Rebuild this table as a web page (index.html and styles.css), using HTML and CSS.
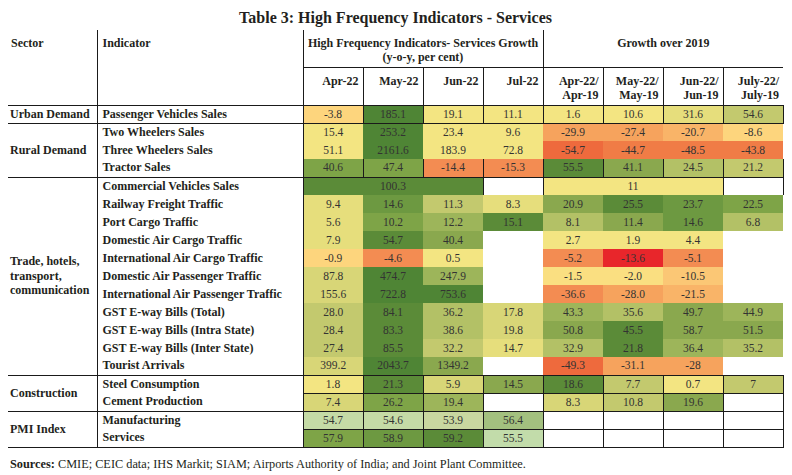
FILE: index.html
```html
<!DOCTYPE html>
<html lang="en">
<head>
<meta charset="utf-8">
<title>Table 3: High Frequency Indicators - Services</title>
<link rel="stylesheet" href="styles.css">
</head>
<body>
<table class="tbl">
  <colgroup>
    <col class="w-sec"><col class="w-ind">
    <col class="w-n"><col class="w-n"><col class="w-n"><col class="w-n">
    <col class="w-n"><col class="w-n"><col class="w-n"><col class="w-n">
  </colgroup>
  <thead>
    <tr class="r-title"><th colspan="10" class="title">Table 3: High Frequency Indicators - Services</th></tr>
    <tr class="r-h1">
      <th rowspan="2" class="h-sec">Sector</th>
      <th rowspan="2" class="h-ind">Indicator</th>
      <th colspan="4" class="h-grp h-grp1">High Frequency Indicators- Services Growth<br>(y-o-y, per cent)</th>
      <th colspan="4" class="h-grp">Growth over 2019</th>
    </tr>
    <tr class="r-h2">
      <th class="h-m">Apr-22</th>
      <th class="h-m">May-22</th>
      <th class="h-m">Jun-22</th>
      <th class="h-m">Jul-22</th>
      <th class="h-m">Apr-22/<br>Apr-19</th>
      <th class="h-m">May-22/<br>May-19</th>
      <th class="h-m">Jun-22/<br>Jun-19</th>
      <th class="h-m h-last">July-22/<br>July-19</th>
    </tr>
  </thead>
  <tbody>
    <tr class="vgrid end">
      <td class="sec">Urban Demand</td>
      <td class="ind">Passenger Vehicles Sales</td>
      <td class="n o1">-3.8</td><td class="n gd">185.1</td><td class="n y3">19.1</td><td class="n y3">11.1</td>
      <td class="n y3 b19">1.6</td><td class="n y3 b19">10.6</td><td class="n y2 b19">31.6</td><td class="n g7 b19">54.6</td>
    </tr>
    <tr>
      <td class="sec end-cell" rowspan="3">Rural Demand</td>
      <td class="ind">Two Wheelers Sales</td>
      <td class="n y3">15.4</td><td class="n gd">253.2</td><td class="n y3">23.4</td><td class="n y3">9.6</td>
      <td class="n o3 b19">-29.9</td><td class="n o3 b19">-27.4</td><td class="n o2 b19">-20.7</td><td class="n o1 b19">-8.6</td>
    </tr>
    <tr>
      <td class="ind">Three Wheelers Sales</td>
      <td class="n y3">51.1</td><td class="n gd">2161.6</td><td class="n y3">183.9</td><td class="n y3">72.8</td>
      <td class="n o6 b19">-54.7</td><td class="n o5 b19">-44.7</td><td class="n o5 b19">-48.5</td><td class="n o5 b19">-43.8</td>
    </tr>
    <tr class="vgrid end">
      <td class="ind">Tractor Sales</td>
      <td class="n g3">40.6</td><td class="n g3">47.4</td><td class="n o4">-14.4</td><td class="n o4">-15.3</td>
      <td class="n g1 b19">55.5</td><td class="n g4 b19">41.1</td><td class="n g6 b19">24.5</td><td class="n g7 b19">21.2</td>
    </tr>
    <tr class="vgrid">
      <td class="sec end-cell" rowspan="11">Trade, hotels,<br>transport,<br>communication</td>
      <td class="ind">Commercial Vehicles Sales</td>
      <td class="n g1" colspan="3">100.3</td><td class="n blank"></td>
      <td class="n y3 b19" colspan="3">11</td><td class="n blank b19"></td>
    </tr>
    <tr>
      <td class="ind">Railway Freight Traffic</td>
      <td class="n y2">9.4</td><td class="n g2">14.6</td><td class="n g7">11.3</td><td class="n y2">8.3</td>
      <td class="n g4 b19">20.9</td><td class="n g1 b19">25.5</td><td class="n g2 b19">23.7</td><td class="n g3 b19">22.5</td>
    </tr>
    <tr>
      <td class="ind">Port Cargo Traffic</td>
      <td class="n y2">5.6</td><td class="n g3">10.2</td><td class="n g5">12.2</td><td class="n g1">15.1</td>
      <td class="n g6 b19">8.1</td><td class="n g4 b19">11.4</td><td class="n g2 b19">14.6</td><td class="n g6 b19">6.8</td>
    </tr>
    <tr>
      <td class="ind">Domestic Air Cargo Traffic</td>
      <td class="n y2">7.9</td><td class="n g1">54.7</td><td class="n g4">40.4</td><td class="n blank"></td>
      <td class="n y3 b19">2.7</td><td class="n y3 b19">1.9</td><td class="n y3 b19">4.4</td><td class="n blank b19"></td>
    </tr>
    <tr>
      <td class="ind">International Air Cargo Traffic</td>
      <td class="n o1">-0.9</td><td class="n o4">-4.6</td><td class="n y3">0.5</td><td class="n blank"></td>
      <td class="n o4 b19">-5.2</td><td class="n rd b19">-13.6</td><td class="n o4 b19">-5.1</td><td class="n blank b19"></td>
    </tr>
    <tr>
      <td class="ind">Domestic Air Passenger Traffic</td>
      <td class="n y1">87.8</td><td class="n gd">474.7</td><td class="n g5">247.9</td><td class="n blank"></td>
      <td class="n o0 b19">-1.5</td><td class="n o0 b19">-2.0</td><td class="n o1b b19">-10.5</td><td class="n blank b19"></td>
    </tr>
    <tr>
      <td class="ind">International Air Passenger Traffic</td>
      <td class="n y1">155.6</td><td class="n gd">722.8</td><td class="n gd">753.6</td><td class="n blank"></td>
      <td class="n o4 b19">-36.6</td><td class="n o3 b19">-28.0</td><td class="n o2 b19">-21.5</td><td class="n blank b19"></td>
    </tr>
    <tr>
      <td class="ind">GST E-way Bills (Total)</td>
      <td class="n g7">28.0</td><td class="n g1">84.1</td><td class="n g6">36.2</td><td class="n y1">17.8</td>
      <td class="n g5 b19">43.3</td><td class="n g6 b19">35.6</td><td class="n g4 b19">49.7</td><td class="n g5 b19">44.9</td>
    </tr>
    <tr>
      <td class="ind">GST E-way Bills (Intra State)</td>
      <td class="n g7">28.4</td><td class="n g1">83.3</td><td class="n g6">38.6</td><td class="n y1">19.8</td>
      <td class="n g4 b19">50.8</td><td class="n g1 b19">45.5</td><td class="n g4 b19">58.7</td><td class="n g4 b19">51.5</td>
    </tr>
    <tr>
      <td class="ind">GST E-way Bills (Inter State)</td>
      <td class="n g7">27.4</td><td class="n g1">85.5</td><td class="n g7">32.2</td><td class="n y2">14.7</td>
      <td class="n g6 b19">32.9</td><td class="n g1 b19">21.8</td><td class="n g5 b19">36.4</td><td class="n g6 b19">35.2</td>
    </tr>
    <tr class="end">
      <td class="ind">Tourist Arrivals</td>
      <td class="n y1">399.2</td><td class="n gd">2043.7</td><td class="n g4">1349.2</td><td class="n blank"></td>
      <td class="n o6 b19">-49.3</td><td class="n o3 b19">-31.1</td><td class="n o3 b19">-28</td><td class="n blank b19"></td>
    </tr>
    <tr class="vgrid hgrid">
      <td class="sec end-cell" rowspan="2">Construction</td>
      <td class="ind">Steel Consumption</td>
      <td class="n y3">1.8</td><td class="n g1">21.3</td><td class="n y1">5.9</td><td class="n g4">14.5</td>
      <td class="n g1 b19">18.6</td><td class="n g7 b19">7.7</td><td class="n y3 b19">0.7</td><td class="n g7 b19">7</td>
    </tr>
    <tr class="vgrid end">
      <td class="ind">Cement Production</td>
      <td class="n y1">7.4</td><td class="n g3">26.2</td><td class="n g5">19.4</td><td class="n blank"></td>
      <td class="n y1 b19">8.3</td><td class="n g7 b19">10.8</td><td class="n g4 b19">19.6</td><td class="n blank b19"></td>
    </tr>
    <tr class="vgrid hgrid">
      <td class="sec end-cell" rowspan="2">PMI Index</td>
      <td class="ind">Manufacturing</td>
      <td class="n p1">54.7</td><td class="n p1">54.6</td><td class="n p2">53.9</td><td class="n p3">56.4</td>
      <td class="n blank b19"></td><td class="n blank b19"></td><td class="n blank b19"></td><td class="n blank b19"></td>
    </tr>
    <tr class="vgrid end">
      <td class="ind">Services</td>
      <td class="n g3">57.9</td><td class="n g2">58.9</td><td class="n g1">59.2</td><td class="n p4">55.5</td>
      <td class="n blank b19"></td><td class="n blank b19"></td><td class="n blank b19"></td><td class="n blank b19"></td>
    </tr>
  </tbody>
</table>
<p class="sources"><strong>Sources:</strong> CMIE; CEIC data; IHS Markit; SIAM; Airports Authority of India; and Joint Plant Committee.</p>
</body>
</html>
```
FILE: styles.css
```css
html, body {
  margin: 0;
  padding: 0;
  background: #ffffff;
}

body {
  font-family: "Liberation Serif", "Times New Roman", serif;
  color: #231f20;
}

.tbl {
  margin: 5px 0 0 8px;
  border-collapse: collapse;
  table-layout: fixed;
  width: 775px;
}

.w-sec { width: 89px; }
.w-ind { width: 206px; }
.w-n { width: 60px; }

.tbl th,
.tbl td {
  padding: 0;
  border: 0 solid #1a1a1a;
}

.r-title { height: 25px; }
.r-h1 { height: 37px; }
.r-h2 { height: 38px; }
.tbl tbody tr { height: 18px; }

.title {
  border-top-width: 1px;
  border-bottom-width: 1px;
  font-size: 16px;
  font-weight: bold;
  text-align: center;
  vertical-align: middle;
  color: #231f20;
  padding-top: 1px;
}

.r-h1 th,
.r-h2 th {
  font-size: 12px;
  font-weight: bold;
  line-height: 14px;
  vertical-align: top;
  padding-top: 6px;
}

.h-sec,
.h-ind {
  text-align: left;
  padding-left: 3px !important;
  border-right-width: 1px !important;
  border-bottom-width: 1px !important;
}

.h-ind { padding-left: 5px !important; }

.h-grp {
  text-align: center;
  border-bottom-width: 1px !important;
}

.h-grp1 { border-right-width: 1px !important; }

.h-m {
  text-align: right;
  padding-right: 4px !important;
  border-right-width: 1px !important;
  border-bottom-width: 1px !important;
}

.h-last { border-right-width: 0 !important; }

.sec {
  font-size: 12px;
  font-weight: bold;
  text-align: left;
  vertical-align: middle;
  padding-left: 2px !important;
  line-height: 14.5px;
  border-right-width: 1px !important;
}

.end-cell { border-bottom-width: 1px !important; }

.ind {
  font-size: 12px;
  font-weight: bold;
  text-align: left;
  padding-left: 5px !important;
  border-right-width: 1px !important;
  white-space: nowrap;
  line-height: 17px;
}

.n {
  font-size: 11.5px;
  text-align: center;
  color: #333333;
  line-height: 17px;
}

.end td { border-bottom-width: 1px; }

.vgrid .n { border-right-width: 1px; }
.hgrid .n { border-bottom-width: 1px; }

.b19 { border-left-width: 1px; }

.blank { background: #ffffff; }

/* heat-map palette */
.gd { background: #4f8535; }
.g1 { background: #5b8b38; }
.g2 { background: #6d9941; }
.g3 { background: #7ea447; }
.g4 { background: #8aa84e; }
.g5 { background: #9db55a; }
.g6 { background: #b3c166; }
.g7 { background: #c3c96e; }
.y1 { background: #d8d677; }
.y2 { background: #e6de7c; }
.y3 { background: #f3e582; }
.o0 { background: #fadf81; }
.o1 { background: #fdd57d; }
.o1b { background: #fbc775; }
.o2 { background: #f9b468; }
.o3 { background: #f6a35d; }
.o4 { background: #f38c52; }
.o5 { background: #f07c46; }
.o6 { background: #ee6a3d; }
.rd { background: #e8262b; }
.p1 { background: #c5dba6; }
.p2 { background: #c9d7a0; }
.p3 { background: #a3c07f; }
.p4 { background: #c2dcaa; }

.sources {
  margin: 9px 0 0 10px;
  font-size: 12.3px;
  color: #231f20;
}

.sources strong { font-weight: bold; }
```
